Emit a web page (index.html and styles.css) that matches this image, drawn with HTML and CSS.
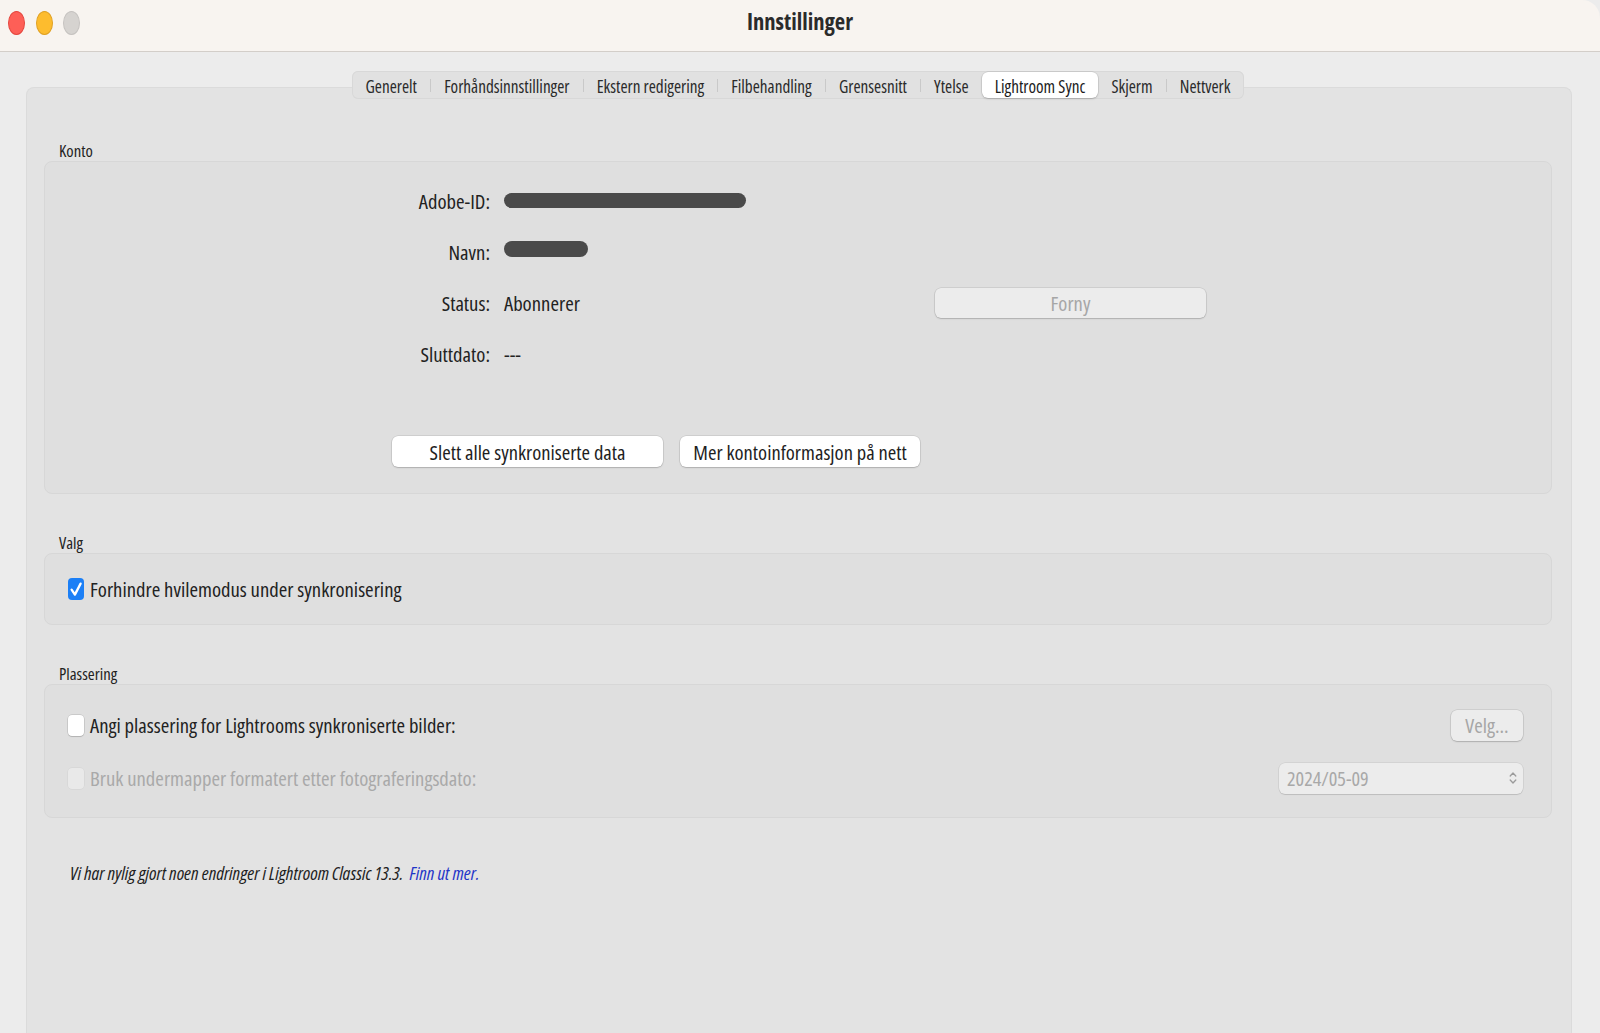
FILE: index.html
```html
<!DOCTYPE html>
<html lang="no">
<head>
<meta charset="utf-8">
<title>Innstillinger</title>
<link rel="stylesheet" href="styles.css">
</head>
<body>
<div class="window">
  <header class="titlebar">
    <div class="lights">
      <span class="light red"></span>
      <span class="light yellow"></span>
      <span class="light gray"></span>
    </div>
    <div class="title">Innstillinger</div>
    <div class="spacer"></div>
  </header>

  <main class="content">
    <nav class="tabs">
      <span class="tab">Generelt</span>
      <span class="tab">Forhåndsinnstillinger</span>
      <span class="tab">Ekstern redigering</span>
      <span class="tab">Filbehandling</span>
      <span class="tab">Grensesnitt</span>
      <span class="tab">Ytelse</span>
      <span class="tab selected">Lightroom Sync</span>
      <span class="tab after-selected">Skjerm</span>
      <span class="tab">Nettverk</span>
    </nav>

    <section class="panel">
      <div class="group-label">Konto</div>
      <div class="group account">
        <div class="fields">
          <div class="lbl">Adobe-ID:</div>
          <div class="val"><span class="redact redact-long"></span></div>
          <div class="lbl">Navn:</div>
          <div class="val"><span class="redact redact-short"></span></div>
          <div class="lbl">Status:</div>
          <div class="val val-status"><span class="status-text">Abonnerer</span><button class="btn btn-disabled btn-forny">Forny</button></div>
          <div class="lbl">Sluttdato:</div>
          <div class="val">---</div>
        </div>
        <div class="actions">
          <button class="btn btn-delete">Slett alle synkroniserte data</button>
          <button class="btn btn-info">Mer kontoinformasjon på nett</button>
        </div>
      </div>

      <div class="group-label spaced">Valg</div>
      <div class="group options">
        <label class="check-row">
          <svg class="checkbox" width="16" height="22" viewBox="0 0 16 22"><rect x="0" y="0" width="16" height="22" rx="4" fill="#1b7ff6"/><path d="M3.6 11.6 L6.9 16.6 L12.6 5.6" fill="none" stroke="#fff" stroke-width="2.3" stroke-linecap="round" stroke-linejoin="round"/></svg>
          <span>Forhindre hvilemodus under synkronisering</span>
        </label>
      </div>

      <div class="group-label spaced">Plassering</div>
      <div class="group location">
        <div class="loc-row">
          <label class="check-row">
            <span class="checkbox-empty"></span>
            <span>Angi plassering for Lightrooms synkroniserte bilder:</span>
          </label>
          <button class="btn btn-disabled btn-velg">Velg...</button>
        </div>
        <div class="loc-row">
          <label class="check-row disabled">
            <span class="checkbox-empty faded"></span>
            <span>Bruk undermapper formatert etter fotograferingsdato:</span>
          </label>
          <div class="popup">
            <span>2024/05-09</span>
            <svg class="chev" width="8" height="14" viewBox="0 0 8 14"><path d="M1.2 5 L4 2 L6.8 5 M1.2 9 L4 12 L6.8 9" fill="none" stroke="#9b9b9b" stroke-width="1.3" stroke-linecap="round" stroke-linejoin="round"/></svg>
          </div>
        </div>
      </div>

      <p class="footnote">Vi har nylig gjort noen endringer i Lightroom Classic 13.3. <a class="link" href="#">Finn ut mer.</a></p>
    </section>
  </main>
</div>
</body>
</html>
```

FILE: styles.css
```css
* { box-sizing: border-box; }

html, body {
  margin: 0;
  padding: 0;
  height: 100%;
}

body {
  font-family: "Open Sans", "Roboto", "Liberation Sans", sans-serif;
  font-stretch: 75%;
  color: #1e1e1e;
  background: #ececec;
}

.window {
  height: 1033px;
  display: flex;
  flex-direction: column;
  background: #ececec;
  border-top-right-radius: 18px;
  overflow: hidden;
}

.titlebar {
  height: 52px;
  flex: none;
  display: grid;
  grid-template-columns: 1fr auto 1fr;
  background: #f8f4f0;
  border-bottom: 1px solid #d3cec9;
}

.lights {
  display: flex;
  gap: 10.5px;
  padding: 11px 0 0 8px;
}

.light {
  width: 17px;
  height: 24px;
  border-radius: 50%;
}
.red { background: #fe5f57; border: 1px solid #e5473f; }
.yellow { background: #fdbc2e; border: 1px solid #e0a124; }
.gray { background: #d6d3d0; border: 1px solid #c6c3c0; }

.title {
  padding-top: 8px;
  font-weight: 700;
  font-size: 22.6px;
  line-height: 28px;
  color: #2b2b2b;
}

.content {
  flex: 1;
  display: flex;
  flex-direction: column;
  padding-top: 19px;
}

.tabs {
  position: relative;
  z-index: 1;
  align-self: center;
  display: flex;
  align-items: center;
  height: 28px;
  background: #e1e1e1;
  border-radius: 6px;
  box-shadow: inset 0 0 0 1px #d8d8d8;
  margin-left: -4px;
  font-size: 17.2px;
  color: #2a2a2a;
}

.tab {
  position: relative;
  height: 26px;
  line-height: 23px;
  padding: 3px 13.6px 0;
}

.tab + .tab::before {
  content: "";
  position: absolute;
  left: -0.5px;
  top: 7px;
  width: 1px;
  height: 13px;
  background: #c9c9c9;
}

.tab.selected::before,
.tab.after-selected::before { display: none; }

.tab.selected {
  background: #ffffff;
  border-radius: 6px;
  padding: 3px 12.5px 0;
  box-shadow: 0 0 0 0.5px rgba(0,0,0,0.12), 0 1px 2px rgba(0,0,0,0.18);
  color: #1c1c1c;
}

.panel {
  flex: 1;
  margin: -12px 28px 0 26px;
  padding: 53px 19px 0 17px;
  background: #e3e3e3;
  border: 1px solid #dbdbdb;
  border-bottom: none;
  border-radius: 8px 8px 0 0;
}

.group-label {
  font-size: 16.7px;
  line-height: 20px;
  padding-left: 15px;
  color: #222;
}

.group-label.spaced { margin-top: 39px; }

.group {
  background: #dfdfdf;
  border: 1px solid #d7d7d7;
  border-radius: 8px;
  font-size: 20.7px;
  line-height: 26px;
}

.account {
  height: 333px;
  padding-top: 13px;
}

.fields {
  display: grid;
  grid-template-columns: 404px 1fr;
  grid-auto-rows: 51px;
  column-gap: 14px;
  padding-left: 41px;
  align-items: center;
}

.lbl { text-align: right; color: #222; }
.val { color: #222; display: flex; align-items: center; }

.redact {
  display: inline-block;
  height: 15px;
  border-radius: 8px;
  background: #4a4a4a;
  margin-top: 0;
}
.redact-long { width: 242px; }
.redact-short { width: 84px; height: 16px; margin-top: -5px; }

.status-text { width: 431px; flex: none; }

.btn {
  font-family: inherit;
  font-stretch: 75%;
  font-size: 20.6px;
  color: #1e1e1e;
  background: #ffffff;
  border: none;
  border-radius: 6px;
  height: 31px;
  padding: 0;
  box-shadow: 0 0 0 0.5px rgba(0,0,0,0.14), 0 1px 1.5px rgba(0,0,0,0.16);
}

.btn-disabled {
  background: #ececec;
  color: #a6a6a6;
}

.btn-forny { width: 271px; height: 30px; margin-top: 0; }

.actions {
  display: flex;
  gap: 17px;
  padding-left: 347px;
  margin-top: 57px;
}

.btn-delete { width: 271px; }
.btn-info { width: 240px; }

.options {
  height: 72px;
  display: flex;
  align-items: center;
  padding-left: 23px;
}

.check-row {
  display: flex;
  align-items: center;
  gap: 6px;
  color: #222;
}

.checkbox { flex: none; display: block; }

.checkbox-empty {
  flex: none;
  width: 16px;
  height: 21px;
  border-radius: 4px;
  background: #ffffff;
  box-shadow: 0 0 0 0.5px rgba(0,0,0,0.18), 0 1px 1px rgba(0,0,0,0.12);
}

.checkbox-empty.faded {
  background: #e9e9e9;
  box-shadow: 0 0 0 0.5px rgba(0,0,0,0.06);
}

.check-row.disabled { color: #a9a9a9; }

.location {
  height: 134px;
  padding: 24px 28px 0 23px;
  display: flex;
  flex-direction: column;
  gap: 21px;
}

.loc-row {
  height: 32px;
  display: flex;
  align-items: center;
  justify-content: space-between;
}

.btn-velg { width: 72px; }

.popup {
  width: 244px;
  height: 31px;
  display: flex;
  align-items: center;
  justify-content: space-between;
  padding: 0 6px 0 8px;
  background: #ececec;
  border-radius: 6px;
  box-shadow: 0 0 0 0.5px rgba(0,0,0,0.1), 0 1px 1px rgba(0,0,0,0.1);
  color: #a8a8a8;
  font-size: 20.2px;
}

.chev { display: block; }

.footnote {
  margin: 45px 0 0 0;
  padding-left: 26px;
  font-style: italic;
  font-size: 18.6px;
  line-height: 20px;
  color: #1e1e1e;
}

.link {
  color: #1f35c8;
  text-decoration: none;
  margin-left: 3px;
}
```
